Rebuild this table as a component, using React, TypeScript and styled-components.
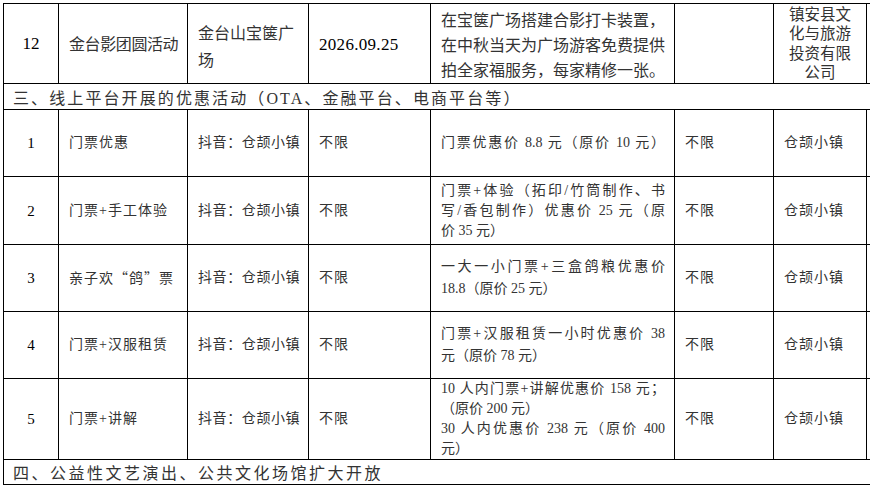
import React from "react";
import styled, { createGlobalStyle, css } from "styled-components";

const GlobalStyle = createGlobalStyle`
  html, body { margin: 0; padding: 0; background: #fff; overflow: hidden; }
  #root { width: 870px; height: 487px; overflow: hidden; }
`;

const COLS = "55px 129px 121px 122px 244px 99px 93px 30px";

const Page = styled.div`
  box-sizing: border-box;
  width: 870px;
  height: 487px;
  padding: 3px 0 0 3px;
  overflow: hidden;
`;

const Table = styled.div`
  display: flex;
  flex-direction: column;
  width: max-content;
  border-top: 1px solid #000;
  border-left: 1px solid #000;
  font-family: "Liberation Serif", "Noto Sans CJK SC", serif;
  color: #333;
`;

const Row = styled.div<{ $h: number }>`
  display: grid;
  grid-template-columns: ${COLS};
  height: ${(p) => p.$h}px;
`;

const Cell = styled.div<{
  $center?: boolean;
  $size?: number;
  $lh?: number;
  $ls?: number;
  $pt?: number;
  $dark?: boolean;
}>`
  box-sizing: border-box;
  border-right: 1px solid #000;
  border-bottom: 1px solid #000;
  display: flex;
  flex-direction: column;
  justify-content: center;
  align-items: ${(p) => (p.$center ? "center" : "stretch")};
  text-align: ${(p) => (p.$center ? "center" : "left")};
  padding: ${(p) => p.$pt ?? 0}px 9px 0 ${(p) => (p.$center ? 9 : 10)}px;
  font-size: ${(p) => p.$size ?? 14}px;
  line-height: ${(p) => p.$lh ?? 20}px;
  letter-spacing: ${(p) => p.$ls ?? 0}px;
  color: ${(p) => (p.$dark ? "#000" : "#333")};
  white-space: nowrap;
  overflow: hidden;
`;

const Line = styled.div<{ $justify?: boolean }>`
  ${(p) =>
    p.$justify &&
    css`
      text-align: justify;
      text-align-last: justify;
    `}
`;

const Cjk = styled.span`
  font-family: "Noto Sans CJK SC", sans-serif;
`;

const SectionRow = styled.div<{ $h: number; $ls: number }>`
  box-sizing: border-box;
  height: ${(p) => p.$h}px;
  border-right: 1px solid #000;
  border-bottom: 1px solid #000;
  display: flex;
  align-items: center;
  padding-left: 9px;
  font-size: 16px;
  letter-spacing: ${(p) => p.$ls}px;
  color: #333;
  white-space: nowrap;
`;

type DescLine = { t: string; j?: boolean };
type DataRow = {
  no: string;
  name: React.ReactNode;
  desc: DescLine[];
  h: number;
  lh?: number;
};

const rows: DataRow[] = [
  {
    no: "1",
    name: "门票优惠",
    desc: [{ t: "门票优惠价 8.8 元（原价 10 元）", j: true }],
    h: 67,
  },
  {
    no: "2",
    name: "门票+手工体验",
    desc: [
      { t: "门票+体验（拓印/竹筒制作、书", j: true },
      { t: "写/香包制作）优惠价 25 元（原", j: true },
      { t: "价 35 元）" },
    ],
    h: 68,
  },
  {
    no: "3",
    name: (
      <>
        亲子欢<Cjk>“</Cjk>鸽<Cjk>”</Cjk>票
      </>
    ),
    desc: [{ t: "一大一小门票+三盒鸽粮优惠价", j: true }, { t: "18.8（原价 25 元）" }],
    h: 67,
    lh: 22,
  },
  {
    no: "4",
    name: "门票+汉服租赁",
    desc: [{ t: "门票+汉服租赁一小时优惠价 38", j: true }, { t: "元（原价 78 元）" }],
    h: 67,
    lh: 22,
  },
  {
    no: "5",
    name: "门票+讲解",
    desc: [
      { t: "10 人内门票+讲解优惠价 158 元；", j: true },
      { t: "（原价 200 元）" },
      { t: "30 人内优惠价 238 元（原价 400", j: true },
      { t: "元）" },
    ],
    h: 81,
  },
];

export default function App() {
  return (
    <>
      <GlobalStyle />
      <Page>
        <Table>
          <Row $h={80}>
            <Cell $center $size={17} $dark>
              <Line>12</Line>
            </Cell>
            <Cell $size={16} $ls={-0.4} $pt={3}>
              <Line>金台影团圆活动</Line>
            </Cell>
            <Cell $size={16} $lh={27} $pt={6}>
              <Line>金台山宝箧广</Line>
              <Line>场</Line>
            </Cell>
            <Cell $size={17} $ls={0.3} $dark $pt={3}>
              <Line>2026.09.25</Line>
            </Cell>
            <Cell $size={16} $lh={25} $pt={4}>
              <Line $justify>在宝箧广场搭建合影打卡装置，</Line>
              <Line $justify>在中秋当天为广场游客免费提供</Line>
              <Line>拍全家福服务，每家精修一张。</Line>
            </Cell>
            <Cell />
            <Cell $center $size={15.5} $lh={19.5}>
              <Line>镇安县文</Line>
              <Line>化与旅游</Line>
              <Line>投资有限</Line>
              <Line>公司</Line>
            </Cell>
            <Cell />
          </Row>
          <SectionRow $h={26} $ls={2.1}>
            三、线上平台开展的优惠活动（OTA、金融平台、电商平台等）
          </SectionRow>
          {rows.map((r) => (
            <Row key={r.no} $h={r.h}>
              <Cell $center $size={15} $dark>
                <Line>{r.no}</Line>
              </Cell>
              <Cell $ls={1}>
                <Line>{r.name}</Line>
              </Cell>
              <Cell $ls={0.6}>
                <Line>抖音：仓颉小镇</Line>
              </Cell>
              <Cell $ls={1}>
                <Line>不限</Line>
              </Cell>
              <Cell $lh={r.lh ?? 20}>
                {r.desc.map((d, i) => (
                  <Line key={i} $justify={d.j}>
                    {d.t}
                  </Line>
                ))}
              </Cell>
              <Cell $ls={1}>
                <Line>不限</Line>
              </Cell>
              <Cell $ls={1}>
                <Line>仓颉小镇</Line>
              </Cell>
              <Cell />
            </Row>
          ))}
          <SectionRow $h={25} $ls={2.5}>
            四、公益性文艺演出、公共文化场馆扩大开放
          </SectionRow>
        </Table>
      </Page>
    </>
  );
}
